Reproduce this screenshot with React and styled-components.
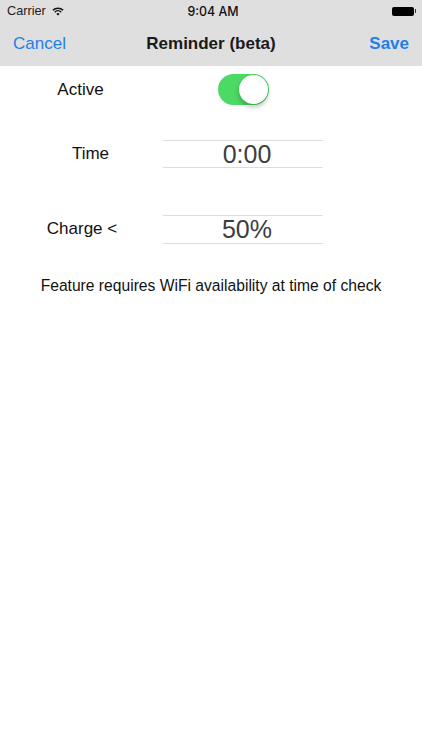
import styled, { createGlobalStyle } from 'styled-components';

const GlobalStyle = createGlobalStyle`
  html, body {
    margin: 0;
    padding: 0;
    background: #fff;
  }
  body {
    font-family: "Liberation Sans", Arial, sans-serif;
    overflow: hidden;
  }
`;

const Screen = styled.div`
  width: 422px;
  height: 750px;
  background: #fff;
  display: flex;
  flex-direction: column;
`;

const Header = styled.header`
  height: 66px;
  background: #dfdfdf;
  flex-shrink: 0;
`;

const StatusBar = styled.div`
  height: 22px;
  padding: 0 6px 0 7px;
  display: grid;
  grid-template-columns: 1fr auto 1fr;
  align-items: center;
  font-size: 12.7px;
  color: #111;
`;

const StatusLeft = styled.div`
  display: flex;
  align-items: center;
  gap: 6px;
  color: #222;
`;

const Clock = styled.div`
  font-family: "Inter", "Liberation Sans", sans-serif;
  font-size: 12.4px;
  font-weight: 500;
  margin-left: 3px;
`;

const Battery = styled.div`
  justify-self: end;
  display: flex;
  align-items: center;
  gap: 1px;
  &::before {
    content: '';
    width: 22px;
    height: 9px;
    border-radius: 2px;
    background: #000;
  }
  &::after {
    content: '';
    width: 1.5px;
    height: 4px;
    background: #333;
  }
`;

const NavBar = styled.div`
  height: 44px;
  padding: 0 13px;
  display: grid;
  grid-template-columns: 1fr auto 1fr;
  align-items: center;
`;

const NavButton = styled.span`
  color: #1f7fe8;
  font-size: 17px;
  font-weight: ${(p) => (p.$bold ? 700 : 400)};
  justify-self: ${(p) => (p.$bold ? 'end' : 'start')};
`;

const NavTitle = styled.span`
  color: #1a1a1a;
  font-size: 17px;
  font-weight: 700;
`;

const Form = styled.main`
  padding: 0;
`;

const Row = styled.div`
  display: grid;
  grid-template-columns: 163px 160px;
  align-items: ${(p) => p.$align || 'start'};
  height: ${(p) => p.$height}px;
  margin-bottom: ${(p) => p.$gap || 0}px;
`;

const Label = styled.div`
  font-size: 17px;
  color: #111;
  text-align: center;
  padding-top: ${(p) => p.$top || 0}px;
  padding-left: ${(p) => p.$indent || 0}px;
  padding-right: ${(p) => p.$trim || 0}px;
`;

const Value = styled.div`
  height: ${(p) => p.$height || 26}px;
  padding-left: 8px;
  border-top: 1px solid #dcdcdc;
  border-bottom: 1px solid #dcdcdc;
  font-size: 25px;
  line-height: 27px;
  text-align: center;
  color: #3d3d3d;
`;

const Toggle = styled.div`
  width: 51px;
  height: 31px;
  margin-left: 55px;
  border-radius: 16px;
  background: #4cd964;
  position: relative;
`;

const Knob = styled.div`
  position: absolute;
  top: 1px;
  right: 1px;
  width: 29px;
  height: 29px;
  border-radius: 50%;
  background: #fff;
  box-shadow: 0 3px 5px rgba(0, 0, 0, 0.25);
`;

const Note = styled.p`
  margin: 1px 0 0;
  font-size: 15.65px;
  color: #111;
  text-align: center;
`;

function WifiIcon() {
  return (
    <svg width="12" height="9" viewBox="0 0 14 10" fill="none" stroke="#111" strokeWidth="1.7">
      <path d="M1 3.6a8.5 8.5 0 0 1 12 0" />
      <path d="M3.2 5.8a5.4 5.4 0 0 1 7.6 0" />
      <path d="M7 9.8 5.1 7.8a2.6 2.6 0 0 1 3.8 0z" fill="#111" stroke="none" />
    </svg>
  );
}

export default function App() {
  return (
    <Screen>
      <GlobalStyle />
      <Header>
        <StatusBar>
          <StatusLeft>
            Carrier
            <WifiIcon />
          </StatusLeft>
          <Clock>9:04 AM</Clock>
          <Battery />
        </StatusBar>
        <NavBar>
          <NavButton>Cancel</NavButton>
          <NavTitle>Reminder (beta)</NavTitle>
          <NavButton $bold>Save</NavButton>
        </NavBar>
      </Header>
      <Form>
        <Row $height={46} $gap={28} $align="center">
          <Label $top={2} $trim={2}>Active</Label>
          <Toggle>
            <Knob />
          </Toggle>
        </Row>
        <Row $height={75}>
          <Label $top={4} $indent={18}>Time</Label>
          <Value>0:00</Value>
        </Row>
        <Row $height={61}>
          <Label $top={4} $indent={1}>Charge &lt;</Label>
          <Value $height={27}>50%</Value>
        </Row>
        <Note>Feature requires WiFi availability at time of check</Note>
      </Form>
    </Screen>
  );
}
